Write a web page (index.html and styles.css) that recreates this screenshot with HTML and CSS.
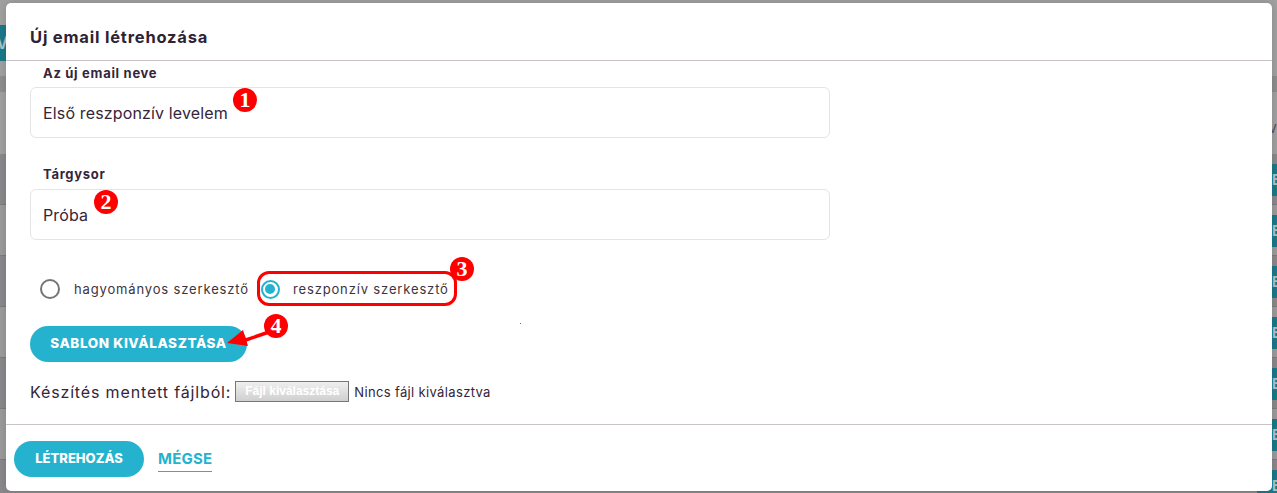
FILE: index.html
```html
<!DOCTYPE html>
<html lang="hu">
<head>
    <meta charset="UTF-8">
    <title>Új email létrehozása</title>
    <link rel="stylesheet" href="styles.css">
</head>
<body>

    <!-- dimmed page behind the modal -->
    <div class="page">
        <div class="banner">V</div>
        <div class="thead"></div>
        <div class="intro">iv</div>
        <div class="row dark"><span class="pill">E</span></div>
        <div class="row"><span class="pill">E</span></div>
        <div class="row dark"><span class="pill">E</span></div>
        <div class="row"><span class="pill">E</span></div>
        <div class="row dark"><span class="pill">E</span></div>
        <div class="row"><span class="pill">E</span></div>
        <div class="row dark"><span class="pill">E</span></div>
    </div>

    <div class="modal">
        <div class="modal-header">Új email létrehozása</div>
        <div class="modal-body">
            <label class="field-label">Az új email neve</label>
            <div class="field">Első reszponzív levelem</div>
            <label class="field-label second">Tárgysor</label>
            <div class="field">Próba</div>

            <div class="radios">
                <span class="radio"></span>
                <span class="radio-text">hagyományos szerkesztő</span>
                <span class="radio checked"></span>
                <span class="radio-text">reszponzív szerkesztő</span>
            </div>

            <div class="btn template-btn">SABLON KIVÁLASZTÁSA</div>

            <div class="file-row">
                <span class="file-label">Készítés mentett fájlból:</span>
                <span class="file-btn">Fájl kiválasztása</span>
                <span class="file-none">Nincs fájl kiválasztva</span>
            </div>
        </div>
        <div class="modal-footer">
            <div class="btn create-btn">LÉTREHOZÁS</div>
            <span class="cancel">MÉGSE</span>
        </div>
    </div>

    <!-- red annotations on top of the screenshot -->
    <div class="mark mark-1">1</div>
    <div class="mark mark-2">2</div>
    <div class="mark mark-3">3</div>
    <div class="mark mark-4">4</div>
    <div class="highlight"></div>
    <div class="speck"></div>
    <svg class="arrow" width="60" height="30" viewBox="0 0 60 30">
        <path d="M46 7 L14 18" stroke="#f00" stroke-width="3.5" fill="none"/>
        <path d="M1 19 L17 6 L22 22 Z" fill="#f00"/>
    </svg>

</body>
</html>
```
FILE: styles.css
```css
* {
    box-sizing: border-box;
}
html, body {
    height: 100%;
}
body {
    margin: 0;
    font-family: Inter, "Noto Sans", sans-serif;
    color: #35253a;
    background-color: #a0a0a0;
    overflow: hidden;
}

/* page behind the modal */
.page {
    padding-top: 25px;
}
.banner {
    width: 60px;
    height: 36px;
    background-color: #1b7888;
    color: #a9c4ca;
    font-size: 17px;
    font-weight: 600;
    line-height: 36px;
    text-indent: -4px;
    overflow: hidden;
}
.thead {
    height: 16px;
    margin-top: 15px;
    background-color: #8e8d8e;
}
.intro {
    height: 62px;
    padding-top: 26px;
    text-align: right;
    color: #5c4f62;
    font-size: 15px;
    line-height: 20px;
}
.row {
    height: 51px;
    padding: 10px 0 9px;
    display: flex;
    justify-content: flex-end;
    background-color: #9b9b9b;
    border-bottom: 1px solid #7d7c7d;
}
.row.dark {
    background-color: #8a888b;
}
.pill {
    width: 20px;
    height: 32px;
    padding-left: 15px;
    background-color: #1b7888;
    color: #a9c4ca;
    font-size: 14px;
    font-weight: 700;
    line-height: 32px;
    overflow: hidden;
}

/* modal */
.modal {
    position: absolute;
    top: 3px;
    left: 6px;
    width: 1266px;
    height: 488px;
    background-color: #fff;
    border-radius: 5px;
    box-shadow: 0 0 8px rgba(0, 0, 0, 0.15);
    display: flex;
    flex-direction: column;
}
.modal-header {
    height: 58px;
    padding: 25px 24px 0;
    font-size: 16.5px;
    font-weight: 700;
    line-height: 18px;
    letter-spacing: 0.8px;
    color: #2f2233;
    border-bottom: 1px solid #c9c3c9;
}
.modal-body {
    flex: 1;
    padding: 4px 24px 0;
}
.field-label {
    display: block;
    padding-left: 13px;
    font-size: 13px;
    font-weight: 700;
    line-height: 17px;
    letter-spacing: 0.7px;
}
.field-label.second {
    margin-top: 28px;
}
.field {
    width: 800px;
    height: 51px;
    margin-top: 5px;
    padding: 0 12px;
    border: 1px solid #e4e4e4;
    border-radius: 6px;
    font-size: 16px;
    line-height: 51px;
    letter-spacing: 0.15px;
}
.second + .field {
    margin-top: 6px;
}
.radios {
    display: flex;
    align-items: center;
    height: 20px;
    margin-top: 39px;
    padding-left: 10px;
}
.radio {
    width: 20px;
    height: 20px;
    border: 2px solid #757575;
    border-radius: 50%;
    flex-shrink: 0;
}
.radio.checked {
    width: 19px;
    height: 19px;
    border-color: #25b2ce;
    position: relative;
    margin-left: 12px;
}
.radio.checked::after {
    content: "";
    position: absolute;
    top: 2.5px;
    left: 2.5px;
    width: 10px;
    height: 10px;
    border-radius: 50%;
    background-color: #25b2ce;
}
.radio-text {
    margin-left: 14px;
    font-size: 13px;
    letter-spacing: 0.85px;
    color: #3e3340;
    white-space: nowrap;
}
.checked + .radio-text {
    margin-left: 13px;
}
.btn {
    background-color: #25b2ce;
    color: #fff;
    border-radius: 18px;
    height: 36px;
    font-weight: 800;
    line-height: 34px;
    text-align: center;
    white-space: nowrap;
}
.template-btn {
    width: 217px;
    margin-top: 27px;
    font-size: 13.5px;
    letter-spacing: 0.6px;
}
.file-row {
    display: flex;
    align-items: center;
    height: 21px;
    margin-top: 19px;
}
.file-label {
    font-size: 16px;
    letter-spacing: 0.85px;
    white-space: nowrap;
}
.file-btn {
    margin-left: 4px;
    width: 114px;
    height: 21px;
    border: 1px solid #777;
    background: linear-gradient(#efefef, #cfcfcf);
    color: #fff;
    font-family: "Liberation Sans", Arial, sans-serif;
    font-size: 12px;
    font-weight: 700;
    line-height: 19px;
    text-align: center;
    white-space: nowrap;
}
.file-none {
    margin-left: 5px;
    font-size: 13px;
    letter-spacing: 0.35px;
    white-space: nowrap;
}
.modal-footer {
    height: 67px;
    padding: 16px 8px 0;
    display: flex;
    align-items: flex-start;
    border-top: 1px solid #c9c3c9;
}
.create-btn {
    width: 130px;
    font-size: 13px;
}
.cancel {
    margin-left: 14px;
    margin-top: 7px;
    height: 24px;
    font-size: 15px;
    font-weight: 700;
    line-height: 21px;
    letter-spacing: 0.2px;
    color: #25b2ce;
    border-bottom: 1px solid #25b2ce;
}

/* annotations */
.mark {
    position: absolute;
    width: 24px;
    height: 24px;
    border-radius: 50%;
    background-color: #f00;
    color: #fff;
    font-family: "Liberation Serif", serif;
    font-size: 22px;
    font-weight: 700;
    line-height: 24px;
    text-align: center;
}
.mark-1 { left: 233px; top: 88px; }
.mark-2 { left: 94px; top: 190px; }
.mark-3 { left: 450px; top: 257px; }
.mark-4 { left: 264px; top: 314px; }
.highlight {
    position: absolute;
    left: 257px;
    top: 271px;
    width: 200px;
    height: 35px;
    border: 3.5px solid #f00;
    border-radius: 12px;
}
.speck {
    position: absolute;
    left: 520px;
    top: 323px;
    width: 1px;
    height: 1px;
    background-color: #e33;
}
.arrow {
    position: absolute;
    left: 226px;
    top: 324px;
}
```
